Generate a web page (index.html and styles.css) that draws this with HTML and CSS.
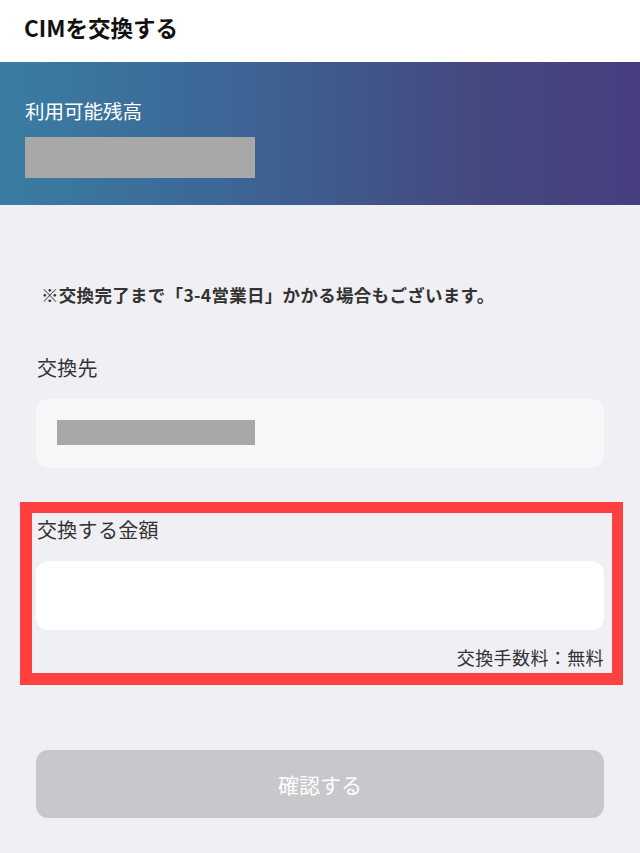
FILE: index.html
```
<!DOCTYPE html>
<html lang="ja">
<head>
<meta charset="utf-8">
<title>CIMを交換する</title>
<link rel="stylesheet" href="styles.css">
</head>
<body>
<header class="topbar"><h1 class="title">CIMを交換する</h1></header>
<section class="balance">
  <div class="balance-label">利用可能残高</div>
  <div class="redact redact-balance"></div>
</section>
<main class="content">
  <p class="notice">※交換完了まで「3-4営業日」かかる場合もございます。</p>
  <div class="field field-dest">
    <div class="field-label">交換先</div>
    <div class="box box-dest"><div class="redact redact-dest"></div></div>
  </div>
  <div class="amount-wrap">
    <div class="field field-amount">
      <div class="field-label">交換する金額</div>
      <div class="box box-amount"></div>
      <div class="fee">交換手数料：無料</div>
    </div>
    <div class="highlight"></div>
  </div>
  <button class="confirm" type="button">確認する</button>
</main>
</body>
</html>
```
FILE: styles.css
```
* { box-sizing: border-box; }
html, body { margin: 0; padding: 0; }
body {
  width: 640px;
  height: 853px;
  overflow: hidden;
  background: #f0eff4;
  font-family: "Noto Sans CJK JP", "Noto Sans", sans-serif;
  color: #333;
}
.topbar {
  height: 62px;
  background: #fff;
  display: flex;
  align-items: center;
  padding: 0 24px 8px;
}
.title {
  margin: 0;
  font-size: 22.5px;
  line-height: 30px;
  font-weight: 700;
  color: #111;
}
.balance {
  height: 143px;
  background: linear-gradient(90deg, #3a7da2 0%, #3c6796 35%, #45487f 75%, #473f80 100%);
  padding: 36px 25px 0;
}
.balance-label {
  color: #fff;
  font-size: 19.5px;
  line-height: 26px;
}
.redact { background: #a8a8a8; }
.redact-balance {
  width: 230px;
  height: 41px;
  margin-top: 13px;
}
.content {
  padding: 77px 36px 0;
  display: flex;
  flex-direction: column;
}
.notice {
  margin: 0 0 0 5px;
  font-size: 17.5px;
  font-weight: 700;
  line-height: 26px;
  letter-spacing: 0.3px;
  color: #333;
}
.field-dest { margin-top: 46px; }
.field-label {
  font-size: 20px;
  line-height: 28px;
  color: #333;
  padding-left: 1px;
  letter-spacing: 0.3px;
}
.box {
  height: 69px;
  border-radius: 12px;
}
.box-dest {
  margin-top: 17px;
  background: #f8f8fa;
  padding: 21px 21px;
}
.redact-dest {
  width: 198px;
  height: 25px;
}
.amount-wrap {
  position: relative;
  margin-top: 34px;
}
.field-amount { padding-top: 14px; }
.box-amount {
  margin-top: 17px;
  background: #fff;
}
.fee {
  text-align: right;
  font-size: 18px;
  line-height: 26px;
  letter-spacing: 0.4px;
  margin-top: 14px;
}
.highlight {
  position: absolute;
  left: -16px;
  right: -19px;
  top: 0;
  height: 183px;
  border-style: solid;
  border-color: #ff4040;
  border-width: 11px 11px 12px 12px;
  pointer-events: none;
}
.confirm {
  margin-top: 80px;
  height: 68px;
  border: none;
  border-radius: 12px;
  background: #c7c8cc;
  color: #fff;
  font-family: inherit;
  font-size: 21px;
  padding: 0;
}
```
